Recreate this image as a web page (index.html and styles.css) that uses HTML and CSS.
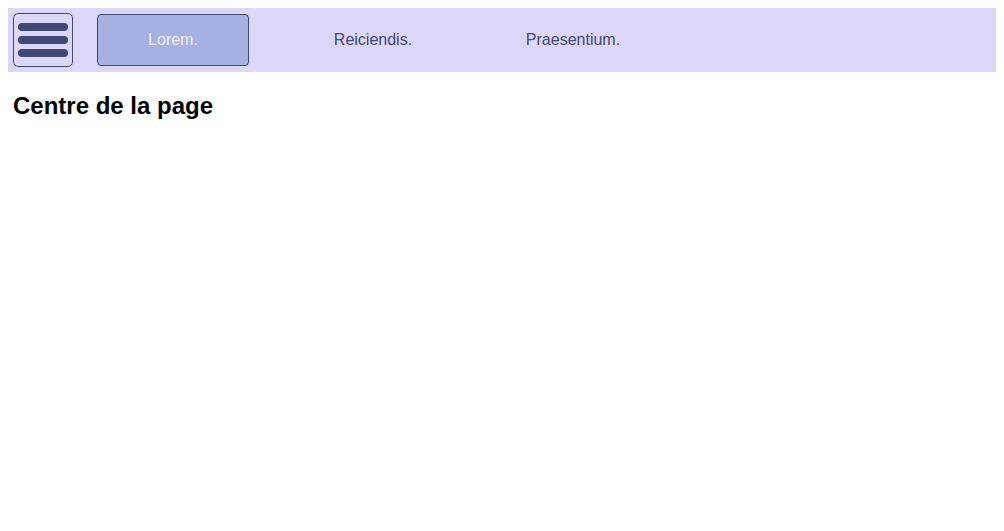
FILE: index.html
```html
<!DOCTYPE html>
<html lang="fr">
<head>
<meta charset="utf-8">
<title>Centre de la page</title>
<link rel="stylesheet" href="styles.css">
</head>
<body>
<nav class="nav">
  <button class="burger" aria-label="Menu">
    <span class="bar"></span>
    <span class="bar"></span>
    <span class="bar"></span>
  </button>
  <a class="item active" href="#">Lorem.</a>
  <a class="item" href="#">Reiciendis.</a>
  <a class="item" href="#">Praesentium.</a>
</nav>
<main class="main">
  <h2 class="title">Centre de la page</h2>
</main>
</body>
</html>
```
FILE: styles.css
```css
body {
  margin: 8px;
  font-family: "Liberation Sans", Arial, sans-serif;
  background: #ffffff;
}
.nav {
  display: flex;
  align-items: center;
  height: 64px;
  padding: 0 5px;
  background: #dcd6f7;
  box-sizing: border-box;
}
.burger {
  display: flex;
  flex-direction: column;
  justify-content: center;
  align-items: center;
  gap: 5px;
  width: 60px;
  height: 54px;
  padding: 0;
  margin: 0;
  border: 1px solid #424874;
  border-radius: 5px;
  background: transparent;
  box-sizing: border-box;
}
.bar {
  display: block;
  width: 50px;
  height: 8px;
  border-radius: 4px;
  background: #424874;
}
.item {
  display: flex;
  align-items: center;
  justify-content: center;
  width: 152px;
  height: 52px;
  margin: 0 24px;
  box-sizing: border-box;
  border: 1px solid transparent;
  border-radius: 4px;
  color: #424874;
  font-size: 16px;
  text-decoration: none;
}
.item.active {
  background: #a6b1e1;
  border-color: #424874;
  color: #f4eeff;
}
.main {
  padding: 0 5px;
}
.title {
  font-size: 24px;
  font-weight: bold;
  margin: 20px 0;
  color: #000;
}
```
